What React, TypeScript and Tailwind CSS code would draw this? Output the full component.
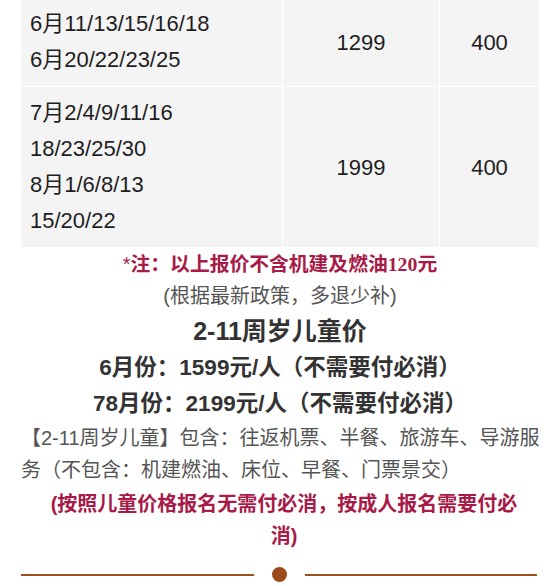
import React from 'react'

interface PriceRow {
  dates: string[]
  adult: string
  extra: string
}

const rows: PriceRow[] = [
  { dates: ['6月11/13/15/16/18', '6月20/22/23/25'], adult: '1299', extra: '400' },
  { dates: ['7月2/4/9/11/16', '18/23/25/30', '8月1/6/8/13', '15/20/22'], adult: '1999', extra: '400' },
]

const font = { fontFamily: '"Liberation Sans", "Noto Sans CJK SC", sans-serif' }

export default function App() {
  return (
    <div className="w-[557px] h-[586px] overflow-hidden bg-white pl-[21px] pr-[18px]" style={font}>
      {/* price table */}
      <div className="-mt-[2px] flex flex-col gap-px bg-white">
        {rows.map((row, i) => (
          <div key={i} className="grid grid-cols-[261px_156px_1fr] gap-px">
            <div className="bg-[#f4f4f4] pl-[9px] pt-[8px] pb-[8px] text-[22px] leading-[36px] text-[#1e1e1e]">
              {row.dates.map((d) => (
                <div key={d}>{d}</div>
              ))}
            </div>
            <div className="bg-[#f4f4f4] flex items-center justify-center text-[22px] text-[#1e1e1e]">
              {row.adult}
            </div>
            <div className="bg-[#f4f4f4] flex items-center justify-center text-[22px] text-[#1e1e1e]">
              {row.extra}
            </div>
          </div>
        ))}
      </div>

      <div className="mt-px text-center text-[19.8px] leading-[32px] font-bold text-[#a81a47]">
        <span className="font-normal">*</span>注：以上报价不含机建及燃油
        <span style={{ fontFamily: '"Liberation Serif", serif' }}>120</span>元
      </div>
      <div className="text-center text-[20px] leading-[32px] text-[#555]">(根据最新政策，多退少补)</div>
      <div className="text-center text-[25px] leading-[38px] font-bold text-[#333]">2-11周岁儿童价</div>
      <div className="text-center text-[22.5px] leading-[36px] font-bold text-[#333]">
        6月份：1599元/人（不需要付必消）
      </div>
      <div className="text-center text-[22.5px] leading-[36px] font-bold text-[#333]">
        78月份：2199元/人（不需要付必消）
      </div>
      <p className="-mr-[3px] text-[20px] leading-[32px] text-[#555]">
        【2-11周岁儿童】包含：往返机票、半餐、旅游车、导游服
        <br />
        务（不包含：机建燃油、床位、早餐、门票景交）
      </p>
      <p className="mt-[2px] pl-[25px] pr-[17px] text-center text-[20px] leading-[32px] font-bold text-[#a81a47]">
        (按照儿童价格报名无需付必消，按成人报名需要付必消)
      </p>

      {/* divider */}
      <div className="mt-[15px] flex items-center h-[15px] pr-[2px]">
        <div className="flex-1 h-[2px] bg-[#a0511f]" />
        <div className="mx-[18px] w-[15px] h-[15px] rounded-full bg-[#9b4a1c]" />
        <div className="flex-1 h-[2px] bg-[#a0511f]" />
      </div>
    </div>
  )
}
